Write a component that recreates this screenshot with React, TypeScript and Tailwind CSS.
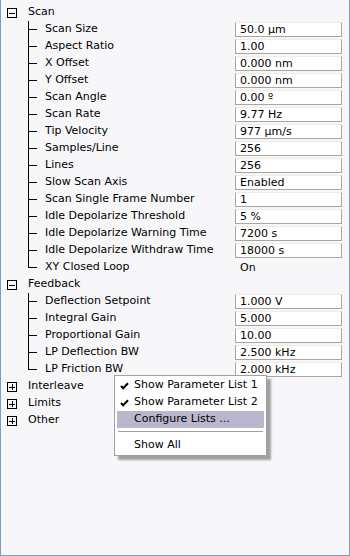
import React from "react";

type Item = { label: string; value: string; box?: boolean };

const scanItems: Item[] = [
  { label: "Scan Size", value: "50.0 µm", box: true },
  { label: "Aspect Ratio", value: "1.00", box: true },
  { label: "X Offset", value: "0.000 nm", box: true },
  { label: "Y Offset", value: "0.000 nm", box: true },
  { label: "Scan Angle", value: "0.00 º", box: true },
  { label: "Scan Rate", value: "9.77 Hz", box: true },
  { label: "Tip Velocity", value: "977 µm/s", box: true },
  { label: "Samples/Line", value: "256", box: true },
  { label: "Lines", value: "256", box: true },
  { label: "Slow Scan Axis", value: "Enabled", box: true },
  { label: "Scan Single Frame Number", value: "1", box: true },
  { label: "Idle Depolarize Threshold", value: "5 %", box: true },
  { label: "Idle Depolarize Warning Time", value: "7200 s", box: true },
  { label: "Idle Depolarize Withdraw Time", value: "18000 s", box: true },
  { label: "XY Closed Loop", value: "On", box: false },
];

const feedbackItems: Item[] = [
  { label: "Deflection Setpoint", value: "1.000 V", box: true },
  { label: "Integral Gain", value: "5.000", box: true },
  { label: "Proportional Gain", value: "10.00", box: true },
  { label: "LP Deflection BW", value: "2.500 kHz", box: true },
  { label: "LP Friction BW", value: "2.000 kHz", box: true },
];

function ExpandBox({ open }: { open: boolean }) {
  return (
    <svg width="10" height="10" viewBox="0 0 10 10" className="block">
      <rect x="0.5" y="0.5" width="9" height="9" fill="none" stroke="#000" strokeWidth="1" shapeRendering="crispEdges" />
      <line x1="2" y1="5" x2="8" y2="5" stroke="#000" strokeWidth="1" shapeRendering="crispEdges" />
      {!open && <line x1="5" y1="2" x2="5" y2="8" stroke="#000" strokeWidth="1" shapeRendering="crispEdges" />}
    </svg>
  );
}

function Group({ title, open }: { title: string; open: boolean }) {
  return (
    <div className="flex h-[17px] items-center">
      <div className="w-[27px] flex items-center pl-[6px]">
        <ExpandBox open={open} />
      </div>
      <span>{title}</span>
    </div>
  );
}

function Child({ item, last }: { item: Item; last: boolean }) {
  return (
    <div className="flex h-[17px] items-center">
      <div className="w-[27px] shrink-0" />
      <svg width="17" height="17" viewBox="0 0 17 17" className="block shrink-0">
        <line x1="0.5" y1="0" x2="0.5" y2={last ? 9 : 17} stroke="#000" strokeWidth="1" shapeRendering="crispEdges" />
        <line x1="0" y1="8.5" x2="9" y2="8.5" stroke="#000" strokeWidth="1" shapeRendering="crispEdges" />
      </svg>
      <span className="flex-1 whitespace-nowrap overflow-hidden">{item.label}</span>
      {item.box ? (
        <div className="w-[107px] h-[15px] mr-[7px] shrink-0 bg-white border border-[#a6a6a6] border-t-[#eeeddf] flex items-center pl-[4px] leading-none">
          {item.value}
        </div>
      ) : (
        <div className="w-[107px] h-[15px] mr-[7px] shrink-0 flex items-center pl-[5px] leading-none">{item.value}</div>
      )}
    </div>
  );
}

function Check() {
  return (
    <svg width="9" height="8" viewBox="0 0 9 8" className="block">
      <path d="M1 4 L3.2 6.3 L8 1.2" fill="none" stroke="#000" strokeWidth="2" />
    </svg>
  );
}

export default function App() {
  return (
    <div
      className="relative w-[350px] h-[556px] bg-[#f7f7fa] border-l border-r border-b border-[#7f9db9] text-[11px] text-black pt-[4px]"
      style={{ fontFamily: '"DejaVu Sans", Verdana, sans-serif' }}
    >
      <Group title="Scan" open />
      {scanItems.map((it, i) => (
        <Child key={it.label} item={it} last={i === scanItems.length - 1} />
      ))}
      <Group title="Feedback" open />
      {feedbackItems.map((it, i) => (
        <Child key={it.label} item={it} last={i === feedbackItems.length - 1} />
      ))}
      <Group title="Interleave" open={false} />
      <Group title="Limits" open={false} />
      <Group title="Other" open={false} />

      <div className="absolute left-[113px] top-[375px] w-[153px] bg-white border border-[#a0a0a0] px-[2px] pt-[1px] shadow-[4px_4px_2px_rgba(0,0,0,0.35)]">
        <div className="relative h-[17px] flex items-center pl-[17px]">
          <span className="absolute left-[3px] top-[5px]"><Check /></span>
          Show Parameter List 1
        </div>
        <div className="relative h-[17px] flex items-center pl-[17px]">
          <span className="absolute left-[3px] top-[5px]"><Check /></span>
          Show Parameter List 2
        </div>
        <div className="relative h-[17px] flex items-center pl-[17px] bg-[#b9b7cb]">Configure Lists ...</div>
        <div className="mx-[1px] mt-[3px] mb-[5px] h-px bg-[#a0a0a0]" />
        <div className="relative h-[17px] flex items-center pl-[17px]">Show All</div>
        <div className="h-[1px]" />
      </div>
    </div>
  );
}
